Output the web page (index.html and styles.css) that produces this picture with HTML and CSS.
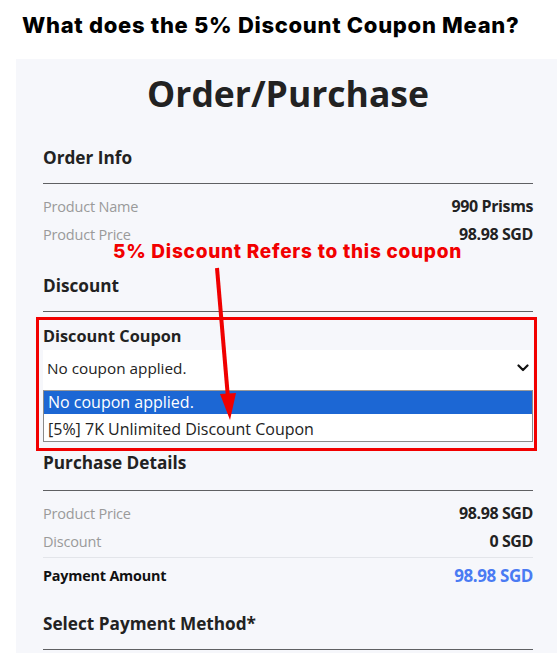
FILE: index.html
```html
<!DOCTYPE html>
<html lang="en">
<head>
<meta charset="utf-8">
<title>5% Discount Coupon</title>
<link rel="stylesheet" href="styles.css">
</head>
<body>
<h1 class="question">What does the 5% Discount Coupon Mean?</h1>
<main class="panel">
  <h2 class="page-title">Order/Purchase</h2>

  <h3 class="section-title first">Order Info</h3>
  <div class="rule"></div>
  <div class="rows">
    <div class="row"><span class="label">Product Name</span><span class="value">990 Prisms</span></div>
    <div class="row"><span class="label">Product Price</span><span class="value">98.98 SGD</span></div>
  </div>

  <h3 class="section-title">Discount</h3>
  <div class="rule"></div>
  <div class="coupon">
    <div class="coupon-label">Discount Coupon</div>
    <div class="select">
      <span>No coupon applied.</span>
      <svg class="chev" width="12" height="8" viewBox="0 0 12 8"><path d="M1.5 1.5 L6 6 L10.5 1.5" fill="none" stroke="#111" stroke-width="2.2" stroke-linecap="round" stroke-linejoin="round"/></svg>
    </div>
    <ul class="options">
      <li class="opt selected">No coupon applied.</li>
      <li class="opt">[5%] 7K Unlimited Discount Coupon</li>
    </ul>
  </div>

  <h3 class="section-title after-coupon">Purchase Details</h3>
  <div class="rule pd-rule"></div>
  <div class="rows">
    <div class="row"><span class="label">Product Price</span><span class="value">98.98 SGD</span></div>
    <div class="row"><span class="label">Discount</span><span class="value">0 SGD</span></div>
  </div>
  <div class="thin-rule"></div>
  <div class="row pay"><span class="pay-label">Payment Amount</span><span class="pay-value">98.98 SGD</span></div>

  <h3 class="section-title method">Select Payment Method*</h3>
  <div class="rule"></div>

  <div class="annot-box"></div>
  <div class="annot-text">5% Discount Refers to this coupon</div>
  <svg class="annot-arrow" width="40" height="160" viewBox="0 0 40 160">
    <line x1="11" y1="4" x2="22" y2="134" stroke="#f00000" stroke-width="4"/>
    <polygon points="24,156 14,130 30,129" fill="#f00000"/>
  </svg>
</main>
</body>
</html>
```

FILE: styles.css
```css
* { box-sizing: border-box; }

body {
  margin: 0;
  background: #ffffff;
  font-family: "Open Sans", "Noto Sans", sans-serif;
  color: #222;
}

.question {
  margin: 0;
  padding: 12px 0 0 22px;
  font-family: Inter, "Liberation Sans", sans-serif;
  font-weight: 800;
  font-size: 22px;
  line-height: 26px;
  color: #000;
  letter-spacing: 0.7px;
  white-space: nowrap;
}

.panel {
  position: relative;
  margin: 21px 0 0 16px;
  width: 541px;
  background: #f6f7fb;
  padding: 11px 24px 3px 27px;
}

.page-title {
  margin: 0;
  text-align: center;
  font-size: 35.5px;
  font-weight: 700;
  line-height: 46px;
  color: #222;
}

.section-title {
  margin: 31px 0 0;
  font-size: 17.2px;
  font-weight: 700;
  line-height: 22px;
  color: #222;
}

.rule {
  margin-top: 14px;
  height: 0;
  border-top: 1.5px solid #5f6063;
}

.rows {
  display: flex;
  flex-direction: column;
  gap: 8px;
  margin-top: 12px;
}

.row {
  display: flex;
  justify-content: space-between;
  align-items: center;
  height: 20px;
}

.label {
  font-size: 14.5px;
  color: #9a9a9a;
  letter-spacing: -0.2px;
}

.value {
  font-size: 16px;
  font-weight: 700;
  color: #222;
  letter-spacing: -0.4px;
}

.coupon {
  margin-top: 13px;
}

.coupon-label {
  font-size: 16.3px;
  font-weight: 700;
  line-height: 22px;
  color: #222;
}

.select {
  margin-top: 3px;
  height: 40px;
  background: #ffffff;
  display: flex;
  align-items: center;
  justify-content: space-between;
  padding: 0 4px 5px 4px;
  font-size: 15.3px;
  color: #222;
}

.chev { display: block; }

.options {
  list-style: none;
  margin: 0;
  padding: 0;
  background: #ffffff;
  border: 1px solid #8a8a8a;
  border-top-color: #9a9a9a;
}

.opt {
  font-size: 16px;
  padding: 4px 4px 0;
  height: 27px;
  line-height: 23px;
  color: #222;
}

.opt.selected {
  background: #1c67d4;
  color: #ffffff;
  padding-top: 0;
  height: 23px;
  line-height: 23px;
}

.section-title.after-coupon { margin-top: 10px; }
.pd-rule { margin-top: 16px; }

.thin-rule {
  margin-top: 6px;
  border-top: 1px solid #e3e5ea;
}

.pay { margin-top: 7px; }

.pay-label {
  font-size: 14.4px;
  font-weight: 700;
  color: #111;
  letter-spacing: -0.2px;
}

.pay-value {
  font-size: 17px;
  font-weight: 700;
  color: #4a7bf3;
  letter-spacing: -0.4px;
}

.section-title.method { margin-top: 28px; }

.annot-box {
  position: absolute;
  left: 20px;
  top: 258px;
  width: 501px;
  height: 134px;
  border: 3px solid #f20000;
}

.annot-text {
  position: absolute;
  left: 97px;
  top: 181px;
  font-family: Inter, "Liberation Sans", sans-serif;
  font-weight: 800;
  font-size: 19px;
  line-height: 24px;
  color: #f20000;
  letter-spacing: 0.75px;
  white-space: nowrap;
}

.annot-arrow {
  position: absolute;
  left: 190px;
  top: 205px;
}
```
